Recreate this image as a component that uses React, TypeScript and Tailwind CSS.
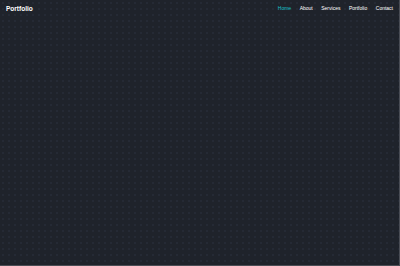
import React from 'react';

const links = ['Home', 'About', 'Services', 'Portfolio', 'Contact'];

const App = () => {
  return (
    <div className="min-h-[266px] w-full bg-[#1f232b] bg-[radial-gradient(#252a35_1px,transparent_1px)] bg-[length:6px_6px] font-['Liberation_Sans',Arial,sans-serif] border-r border-b border-[#4a4d55]">
      {/* Navbar */}
      <nav className="flex items-center justify-between h-4 pl-[6px] pr-[6px] pt-[1px]">
        <span className="text-[6.5px] font-bold text-white">Portfolio</span>
        <ul className="flex items-center gap-[8.5px]">
          {links.map((l, i) => (
            <li key={l} className={`text-[5px] ${i === 0 ? 'text-[#17c3c9]' : 'text-white'}`}>
              {l}
            </li>
          ))}
        </ul>
      </nav>
    </div>
  );
};

export default App;
